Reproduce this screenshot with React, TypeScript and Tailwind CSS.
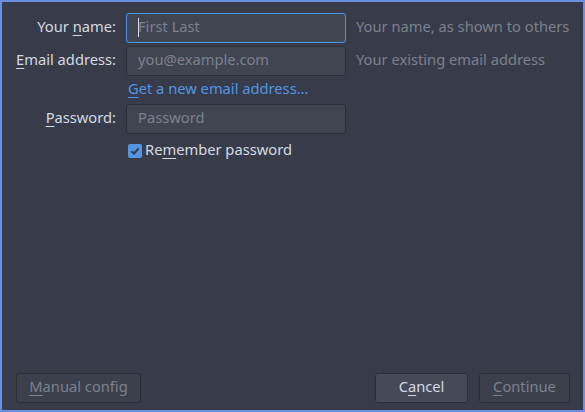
import React from "react";

const U = ({ children }: { children: React.ReactNode }) => (
  <span className="underline underline-offset-[3px] decoration-1">{children}</span>
);

export default function App() {
  return (
    <div
      className="w-[585px] h-[412px] border-2 border-[#6b8fe0] bg-[#383c4a] flex flex-col text-[14.7px] text-[#d3dae3]"
      style={{ fontFamily: '"Noto Sans", sans-serif' }}
    >
      <div className="grid grid-cols-[114px_220px_auto] gap-x-[10px] gap-y-[3px] pt-[11px] items-center">
        <div className="text-right pb-[3px]">Your <U>n</U>ame:</div>
        <div className="h-[30px] rounded-[3px] border border-[#5294e2] bg-[#404552] flex items-center px-[11px] pb-[3px] relative">
          <span className="absolute left-[11px] top-[4px] w-px h-[19px] bg-[#d3dae3]" />
          <span className="text-[#7c818c]">First Last</span>
        </div>
        <div className="text-[#7c818c] whitespace-nowrap pb-[3px]">Your name, as shown to others</div>

        <div className="text-right pb-[3px]"><U>E</U>mail address:</div>
        <div className="h-[30px] rounded-[3px] border border-[#2b2e39] bg-[#404552] flex items-center px-[11px] pb-[3px]">
          <span className="text-[#7c818c]">you@example.com</span>
        </div>
        <div className="text-[#7c818c] whitespace-nowrap pb-[3px]">Your existing email address</div>

        <div />
        <div className="h-[22px] flex items-center whitespace-nowrap text-[#5294e2] pb-[3px]">
          <span className="pl-[2px]"><U>G</U>et a new email address…</span>
        </div>
        <div />

        <div className="text-right pb-[3px]"><U>P</U>assword:</div>
        <div className="h-[30px] rounded-[3px] border border-[#2b2e39] bg-[#404552] flex items-center px-[11px] pb-[3px]">
          <span className="text-[#7c818c]">Password</span>
        </div>
        <div />

        <div />
        <div className="h-[28px] flex items-center gap-[3px] pl-[2px] whitespace-nowrap">
          <span className="w-[14px] h-[14px] rounded-[2px] bg-[#5294e2] flex items-center justify-center">
            <svg width="10" height="10" viewBox="0 0 10 10">
              <path d="M1.5 5.2 L4 7.5 L8.5 2.5" stroke="#383c4a" strokeWidth="2" fill="none" />
            </svg>
          </span>
          <span className="pb-[3px]">Re<U>m</U>ember password</span>
        </div>
        <div />
      </div>
      <div className="flex-1" />
      <div className="flex items-center pl-[14px] pr-[13px] pb-[7px]">
        <div className="w-[125px] h-[30px] rounded-[3px] border border-[#2b2e39] bg-[#3c404d] text-[#7c818c] flex items-center justify-center pb-[3px]">
          <span><U>M</U>anual config</span>
        </div>
        <div className="flex-1" />
        <div className="w-[93px] h-[30px] rounded-[3px] border border-[#2b2e39] bg-[#444a58] flex items-center justify-center pb-[3px]">
          <span>C<U>a</U>ncel</span>
        </div>
        <div className="w-[91px] h-[30px] ml-[11px] rounded-[3px] border border-[#2b2e39] bg-[#3c404d] text-[#7c818c] flex items-center justify-center pb-[3px]">
          <span><U>C</U>ontinue</span>
        </div>
      </div>
    </div>
  );
}
